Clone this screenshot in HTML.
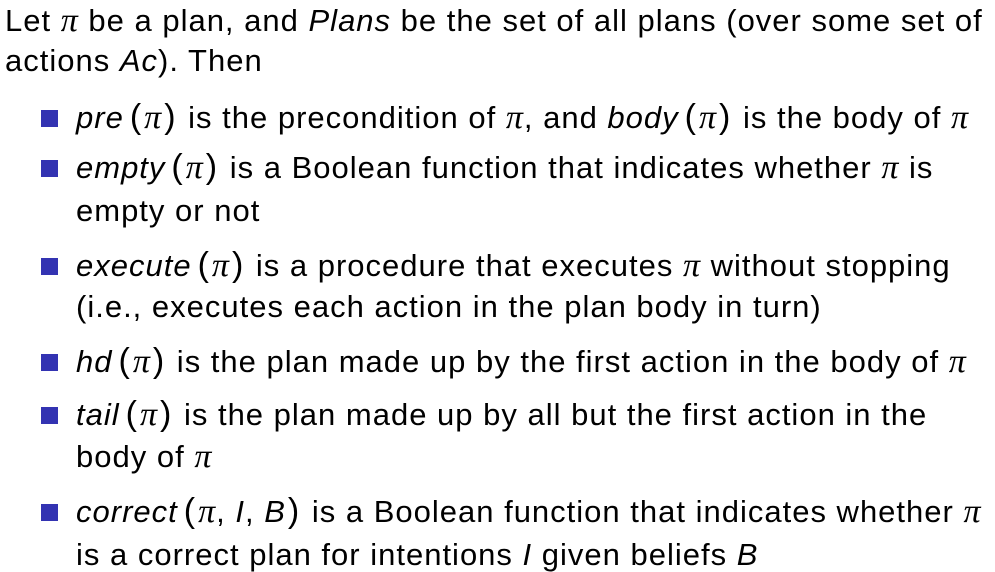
<!DOCTYPE html>
<html><head><meta charset="utf-8"><style>
body{margin:0;width:995px;height:572px;background:#fff;overflow:hidden;position:relative;font-family:"Liberation Sans",sans-serif;font-size:31px;letter-spacing:1px;color:#000}
.l{position:absolute;white-space:nowrap;line-height:34px}
i{font-style:italic}
.p{font-family:"Liberation Serif",serif;font-style:italic;font-size:34px}
.q{font-size:34px;margin:0 2px 0 2px}
.q.o{margin-left:6px}
.b{position:absolute;left:41px;width:17px;height:17px;background:#3333b2}
</style></head><body>
<div class="l" style="left:5px;top:4px">Let <span class="p">π</span> be a plan, and <i>Plans</i> be the set of all plans (over some set of</div>
<div class="l" style="left:5px;top:44px">actions <i>Ac</i>). Then</div>

<div class="b" style="top:110px"></div>
<div class="l" style="left:76px;top:100px"><i>pre</i><span class="q o">(</span><span class="p">π</span><span class="q">)</span> is the precondition of <span class="p">π</span>, and <i>body</i><span class="q o">(</span><span class="p">π</span><span class="q">)</span> is the body of <span class="p">π</span></div>

<div class="b" style="top:160px"></div>
<div class="l" style="left:76px;top:150px"><i>empty</i><span class="q o">(</span><span class="p">π</span><span class="q">)</span> is a Boolean function that indicates whether <span class="p">π</span> is</div>
<div class="l" style="left:76px;top:194px">empty or not</div>

<div class="b" style="top:258px"></div>
<div class="l" style="left:76px;top:248px"><i>execute</i><span class="q o">(</span><span class="p">π</span><span class="q">)</span> is a procedure that executes <span class="p">π</span> without stopping</div>
<div class="l" style="left:76px;top:290px">(i.e., executes each action in the plan body in turn)</div>

<div class="b" style="top:354px"></div>
<div class="l" style="left:76px;top:344px"><i>hd</i><span class="q o">(</span><span class="p">π</span><span class="q">)</span> is the plan made up by the first action in the body of <span class="p">π</span></div>

<div class="b" style="top:407px"></div>
<div class="l" style="left:76px;top:397px"><i>tail</i><span class="q o">(</span><span class="p">π</span><span class="q">)</span> is the plan made up by all but the first action in the</div>
<div class="l" style="left:76px;top:440px">body of <span class="p">π</span></div>

<div class="b" style="top:504px"></div>
<div class="l" style="left:76px;top:494px"><i>correct</i><span class="q o">(</span><span class="p">π</span>, <i>I</i>, <i>B</i><span class="q">)</span> is a Boolean function that indicates whether <span class="p">π</span></div>
<div class="l" style="left:76px;top:538px">is a correct plan for intentions <i>I</i> given beliefs <i>B</i></div>
</body></html>
